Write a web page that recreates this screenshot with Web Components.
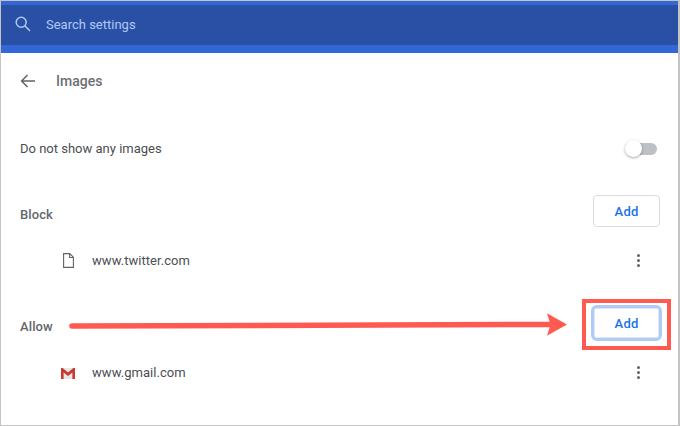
<!DOCTYPE html>
<html>
<head>
<meta charset="utf-8">
<title>Images</title>
<style>
html, body { margin: 0; padding: 0; background: #fff; }
body { font-family: Roboto, "Liberation Sans", sans-serif; }
</style>
</head>
<body>
<settings-window>
  <search-header slot="header" placeholder="Search settings"></search-header>
  <page-title>Images</page-title>
  <toggle-row>Do not show any images</toggle-row>
  <section-head label="Block"></section-head>
  <site-row site="www.twitter.com" icon="file"></site-row>
  <section-head label="Allow" focused></section-head>
  <site-row site="www.gmail.com" icon="gmail"></site-row>
  <call-out slot="overlay"></call-out>
</settings-window>

<script>
class SettingsWindow extends HTMLElement {
  connectedCallback() {
    this.attachShadow({ mode: "open" }).innerHTML = `
<style>
:host {
  display: block;
  position: relative;
  box-sizing: border-box;
  width: 680px;
  height: 426px;
  overflow: hidden;
  background: #fff;
  border: solid #c4c4c4;
  border-width: 1px 2px 1px 1px;
}
main {
  display: flex;
  flex-direction: column;
  padding: 0 18px 0 19px;
}
</style>
<slot name="header"></slot>
<main><slot></slot></main>
<slot name="overlay"></slot>`;
  }
}

class SearchHeader extends HTMLElement {
  connectedCallback() {
    this.attachShadow({ mode: "open" }).innerHTML = `
<style>
:host {
  display: flex;
  align-items: center;
  gap: 14px;
  box-sizing: border-box;
  height: 52px;
  padding: 0 0 2px 13px;
  background: #2a50a6;
  border-top: 4px solid #3367d6;
  border-bottom: 8px solid #3367d6;
}
svg { display: block; }
span { color: #b0c8f5; font-size: 13px; }
</style>
<svg width="18" height="18" viewBox="0 0 18 18" fill="none" stroke="#b0c8f5" stroke-width="1.5">
  <circle cx="7.2" cy="7.2" r="5"/>
  <path d="M10.8 10.8L16 16"/>
</svg>
<span>${this.getAttribute("placeholder")}</span>`;
  }
}

class PageTitle extends HTMLElement {
  connectedCallback() {
    this.attachShadow({ mode: "open" }).innerHTML = `
<style>
:host {
  display: flex;
  align-items: center;
  gap: 20px;
  height: 56px;
  color: #6b6f74;
  font-size: 14px;
  font-weight: 500;
}
svg { display: block; }
</style>
<svg width="16" height="14" viewBox="0 0 16 14" fill="none" stroke="#5f6368" stroke-width="1.5">
  <path d="M15 7H2M7.5 1L1.6 7l5.9 6"/>
</svg>
<slot></slot>`;
  }
}

class ToggleRow extends HTMLElement {
  connectedCallback() {
    this.attachShadow({ mode: "open" }).innerHTML = `
<style>
:host {
  display: flex;
  align-items: center;
  justify-content: space-between;
  height: 46px;
  margin-top: 16px;
  color: #4b4e52;
  font-size: 13px;
}
.toggle {
  position: relative;
  width: 30px;
  height: 12px;
  margin: 2px 3px 0 0;
  border-radius: 6px;
  background: #bdc1c6;
}
.toggle::after {
  content: "";
  position: absolute;
  left: -2px;
  top: -3px;
  width: 17px;
  height: 17px;
  border-radius: 50%;
  background: #fff;
  box-shadow: 0 1px 3px rgba(0,0,0,.35);
}
</style>
<slot></slot>
<div class="toggle"></div>`;
  }
}

class SectionHead extends HTMLElement {
  connectedCallback() {
    const focused = this.hasAttribute("focused");
    this.attachShadow({ mode: "open" }).innerHTML = `
<style>
:host {
  display: flex;
  align-items: center;
  justify-content: space-between;
  height: 32px;
  margin-top: 24px;
  color: #63676c;
  font-size: 13px;
  font-weight: 500;
  letter-spacing: .1px;
}
.label { position: relative; top: 3px; }
button {
  box-sizing: border-box;
  flex: none;
  width: 67px;
  height: 32px;
  background: #fff;
  border: 1px solid #dadce0;
  border-radius: 4px;
  color: #1a73e8;
  font: 500 13px Roboto, "Liberation Sans", sans-serif;
  letter-spacing: .2px;
}
button.focused {
  width: 71px;
  height: 36px;
  margin-right: -2px;
  border: 3px solid #aecbfa;
  border-radius: 6px;
  box-shadow: inset 0 0 0 1px #e3e7ee;
}
</style>
<span class="label">${this.getAttribute("label")}</span>
<button class="${focused ? "focused" : ""}">Add</button>`;
  }
}

const siteIcons = {
  file: `<svg width="11" height="15" viewBox="0 0 11 15" fill="none" stroke="#5f6368" stroke-width="1.1">
    <path d="M.6.6h6.2l3.6 3.7v10.1H.6zM6.6.6v3.9h3.8"/></svg>`,
  gmail: `<svg width="14" height="11" viewBox="0 0 14 11" style="margin-top:2px">
    <path d="M0 0h14v11H0z" fill="#e6e6e6"/>
    <path d="M0 0h1.6L7 4.6 12.4 0H14v11h-2.6V4.4L7 8 2.6 4.4V11H0z" fill="#c9392e"/></svg>`
};

class SiteRow extends HTMLElement {
  connectedCallback() {
    this.attachShadow({ mode: "open" }).innerHTML = `
<style>
:host {
  display: flex;
  align-items: center;
  height: 46px;
  margin-top: 10px;
  color: #4b4e52;
  font-size: 13px;
  letter-spacing: .05px;
}
.icon { display: flex; justify-content: center; width: 16px; margin: 0 16px 0 40px; }
.site { flex: 1; }
.more { display: flex; flex-direction: column; gap: 2px; margin-right: 20px; }
.more i { display: block; width: 3px; height: 3px; border-radius: 50%; background: #5f6368; }
</style>
<div class="icon">${siteIcons[this.getAttribute("icon")]}</div>
<span class="site">${this.getAttribute("site")}</span>
<div class="more"><i></i><i></i><i></i></div>`;
  }
}

class CallOut extends HTMLElement {
  connectedCallback() {
    this.attachShadow({ mode: "open" }).innerHTML = `
<style>
:host { position: absolute; inset: 0; pointer-events: none; }
svg { position: absolute; left: 0; top: 0; }
.box {
  position: absolute;
  left: 581px;
  top: 298px;
  box-sizing: border-box;
  width: 89px;
  height: 51px;
  border: 4px solid #ff5a4f;
}
</style>
<svg width="680" height="426" viewBox="0 0 680 426">
  <path d="M71 325L549 323.4" stroke="#ff5a4f" stroke-width="5.5" stroke-linecap="round" fill="none"/>
  <path d="M546 312.3L566 323.4 546 334.7 549.5 323.4z" fill="#ff5a4f"/>
</svg>
<div class="box"></div>`;
  }
}

customElements.define("settings-window", SettingsWindow);
customElements.define("search-header", SearchHeader);
customElements.define("page-title", PageTitle);
customElements.define("toggle-row", ToggleRow);
customElements.define("section-head", SectionHead);
customElements.define("site-row", SiteRow);
customElements.define("call-out", CallOut);
</script>
</body>
</html>
